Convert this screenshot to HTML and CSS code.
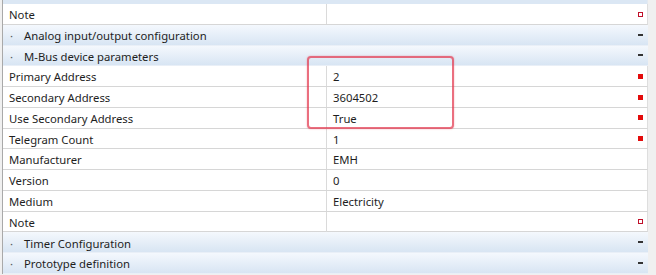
FILE: index.html
```html
<!DOCTYPE html>
<html lang="en">

<head>
    <meta charset="UTF-8">
    <meta name="viewport" content="width=device-width, initial-scale=1.0">
    <title>Properties</title>
    <link rel="stylesheet" href="styles.css">
</head>

<body>
    <div class="grid">
        <div class="band"></div>

        <div class="row">
            <div class="name">Note</div>
            <div class="value"><span></span><i class="mark empty"></i></div>
        </div>

        <div class="cat">
            <span class="dot">·</span><span class="title">Analog input/output configuration</span><i class="minus"></i>
        </div>
        <div class="cat">
            <span class="dot">·</span><span class="title">M-Bus device parameters</span><i class="minus"></i>
        </div>

        <div class="row">
            <div class="name">Primary Address</div>
            <div class="value"><span>2</span><i class="mark full"></i></div>
        </div>
        <div class="row">
            <div class="name">Secondary Address</div>
            <div class="value"><span>3604502</span><i class="mark full"></i></div>
        </div>
        <div class="row">
            <div class="name">Use Secondary Address</div>
            <div class="value"><span>True</span><i class="mark full"></i></div>
        </div>
        <div class="row">
            <div class="name">Telegram Count</div>
            <div class="value"><span>1</span><i class="mark full"></i></div>
        </div>
        <div class="row">
            <div class="name">Manufacturer</div>
            <div class="value"><span>EMH</span></div>
        </div>
        <div class="row">
            <div class="name">Version</div>
            <div class="value"><span>0</span></div>
        </div>
        <div class="row">
            <div class="name">Medium</div>
            <div class="value"><span>Electricity</span></div>
        </div>
        <div class="row">
            <div class="name">Note</div>
            <div class="value"><span></span><i class="mark empty"></i></div>
        </div>

        <div class="cat">
            <span class="dot">·</span><span class="title">Timer Configuration</span><i class="minus"></i>
        </div>
        <div class="cat">
            <span class="dot">·</span><span class="title">Prototype definition</span><i class="minus"></i>
        </div>

        <!-- hand drawn highlight over the address values -->
        <div class="highlight"></div>
    </div>
</body>

</html>
```

FILE: styles.css
```css
* {
    margin: 0;
    padding: 0;
    box-sizing: border-box;
}

body {
    background-color: #f0f0f0;
    font-family: "Noto Sans", Lato, sans-serif;
    font-size: 11.3px;
    color: #1e1e1e;
    height: 275px;
    overflow: hidden;
}

.grid {
    position: relative;
    width: 646px;
    margin-left: 2px;
    border-left: 1px solid #a9a9a9;
    background-color: #ffffff;
}

.band {
    height: 4px;
    background-color: #dbe7f4;
    border-right: 1px solid #e3e9f0;
}

.row {
    display: grid;
    grid-template-columns: 324px 1fr;
    height: 20.75px;
    border-bottom: 1px solid #d6d6d6;
    border-right: 1px solid #dedede;
}

.name {
    padding-left: 6px;
    padding-top: 2px;
    line-height: 18px;
    border-right: 1px solid #dadada;
}

.value {
    display: flex;
    align-items: center;
    justify-content: space-between;
    padding-left: 6px;
    padding-right: 4px;
}

.value span {
    padding-top: 2px;
    line-height: 18px;
}

.mark {
    width: 5px;
    height: 5px;
}

.mark.empty {
    border: 1px solid #c0102a;
}

.mark.full {
    background-color: #e30b0b;
}

.cat {
    display: flex;
    align-items: center;
    height: 20.75px;
    padding-left: 7px;
    padding-right: 5px;
    background: linear-gradient(#f4f8fd, #d8e5f3);
    border-bottom: 1px solid #e9eff7;
}

.dot {
    width: 14px;
    padding-top: 2px;
    color: #555;
}

.title {
    flex: 1;
    padding-top: 2px;
}

.minus {
    width: 5px;
    height: 2px;
    background-color: #333;
}

.highlight {
    position: absolute;
    left: 304px;
    top: 56px;
    width: 147px;
    height: 73px;
    border: 2px solid rgba(226, 50, 72, 0.7);
    border-radius: 4px;
    box-shadow: 0 0 1.5px rgba(226, 50, 72, 0.5);
}
```
